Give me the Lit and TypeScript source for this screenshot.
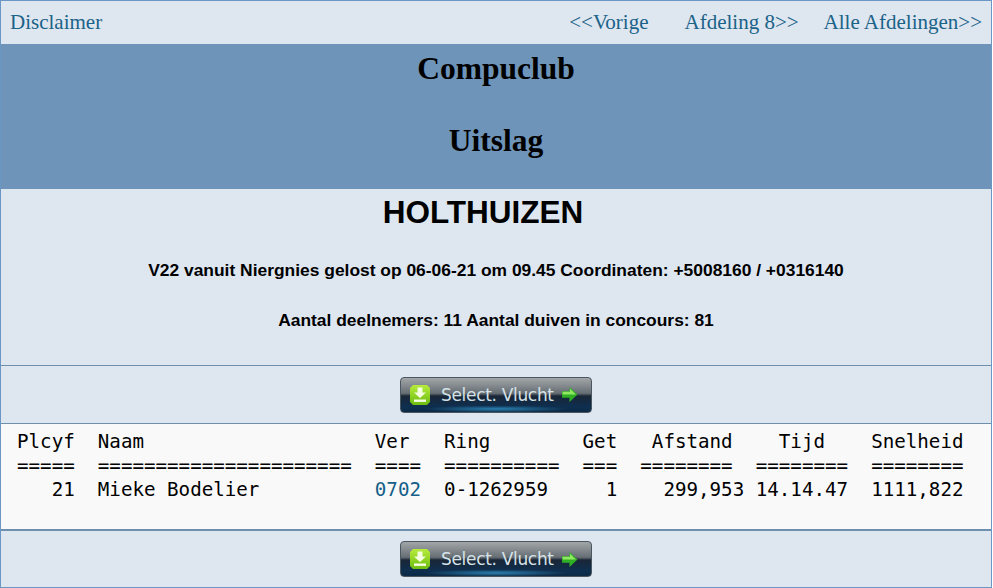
import { LitElement, html, css } from "lit";
import { customElement } from "lit/decorators.js";

const button = html`<a class="btn" href="#">
  <svg class="ico" width="22" height="22" viewBox="0 0 22 22">
    <defs><linearGradient id="g" x1="0" y1="0" x2="0" y2="1"><stop offset="0" stop-color="#b6ec3c"/><stop offset="1" stop-color="#6cbc10"/></linearGradient></defs>
    <path d="M4 1h14l3 3v14l-3 3H4l-3-3V4z" fill="url(#g)"/>
    <path d="M8.500 3.500h5v5h3.500L11 14 5 8.500h3.500z" fill="#f4fde0"/>
    <rect x="5" y="15.500" width="12" height="2.400" fill="#f4fde0"/>
  </svg>
  <span class="lbl">Select. Vlucht</span>
  <svg class="arr" width="17" height="17" viewBox="0 0 16 16">
    <path d="M8 1 15.500 8 8 15v-4H1V5h7z" fill="#2fb024"/>
    <path d="M8.500 2.500 14 8H1.500V5.500h7z" fill="#8fe860"/>
  </svg>
</a>`;

@customElement("app-root")
export class AppRoot extends LitElement {
  static styles = css`
    :host { display: block; width: 993px; height: 588px; overflow: hidden; }
    .page {
      box-sizing: border-box; width: 992px; height: 588px;
      border: 1px solid #6b97c4; background: #dee6f0;
      display: flex; flex-direction: column;
      font-family: "Liberation Serif", serif;
    }
    .nav {
      height: 43px; box-sizing: border-box; flex: none;
      display: flex; align-items: center; padding: 0 9px 0 9px;
      font-size: 21px;
    }
    .nav a { color: #1a6288; text-decoration: none; }
    .nav .spacer { flex: 1; }
    .nav .mid { margin-left: 36px; margin-right: 25px; }
    .band {
      height: 145px; flex: none; box-sizing: border-box; background: #6e94b9;
      text-align: center; color: #000;
      display: flex; flex-direction: column; gap: 35px; padding-top: 6px;
    }
    h1 { margin: 0; font-size: 31.500px; line-height: 37px; font-weight: bold; }
    .info {
      height: 176px; flex: none; box-sizing: border-box; text-align: center;
      font-family: "Liberation Sans", sans-serif; font-weight: bold; color: #000;
      padding-top: 5px;
    }
    .place { font-size: 31.500px; line-height: 37px; margin: 0 26px 0 0; }
    .info p { margin: 0; font-size: 17.420px; line-height: 20px; }
    .info p.a { margin-top: 29px; }
    .info p.b { margin-top: 30px; }
    .btnrow {
      flex: none; height: 58px; box-sizing: border-box;
      border-top: 1px solid #6f8fae;
      display: flex; align-items: center; justify-content: center;
    }
    .btnrow.bottom { flex: 1; height: auto; }
    .btn {
      box-sizing: border-box; width: 192px; height: 36px; border-radius: 4px;
      border: 1px solid #4a5660;
      background:
        radial-gradient(ellipse 38% 10% at 50% 91%, #2a80b0 0%, rgba(42, 128, 176, 0) 100%),
        linear-gradient(to bottom, #a2a6a8 0%, #666e74 45%, #1a2636 53%, #0e2f50 85%, #0d2a45 100%);
      display: flex; align-items: center; padding-left: 8px; gap: 10px;
      text-decoration: none;
    }
    .ico { flex: none; }
    .arr { flex: none; margin-left: -3px; }
    .lbl {
      font-family: "DejaVu Sans", sans-serif; font-size: 17px; color: #d5e2e8;
      letter-spacing: -0.320px; white-space: nowrap; font-weight: normal;
    }
    .table {
      flex: none; height: 107px; box-sizing: border-box; background: #f9f9f9;
      border-top: 1px solid #6f8fae; border-bottom: 1px solid #6f8fae;
      padding: 6px 0 0 16px;
      font-family: "DejaVu Sans Mono", monospace; font-size: 19.180px; line-height: 24px;
      color: #000;
    }
    .row { white-space: pre; }
    .table a { color: #155f88; text-decoration: none; }
  `;

  render() {
    return html`<div class="page">
      <div class="nav">
        <a href="#">Disclaimer</a><span class="spacer"></span>
        <a href="#">&lt;&lt;Vorige</a>
        <a class="mid" href="#">Afdeling 8&gt;&gt;</a>
        <a href="#">Alle Afdelingen&gt;&gt;</a>
      </div>
      <div class="band"><h1>Compuclub</h1><h1>Uitslag</h1></div>
      <div class="info">
        <div class="place">HOLTHUIZEN</div>
        <p class="a">V22 vanuit Niergnies gelost op 06-06-21 om 09.45 Coordinaten: +5008160 / +0316140</p>
        <p class="b">Aantal deelnemers: 11 Aantal duiven in concours: 81</p>
      </div>
      <div class="btnrow">${button}</div>
      <div class="table">
        <div class="row">Plcyf  Naam                    Ver   Ring        Get   Afstand    Tijd    Snelheid</div>
        <div class="row">=====  ======================  ====  ==========  ===  ========  ========  ========</div>
        <div class="row">   21  Mieke Bodelier          <a href="#">0702</a>  0-1262959     1    299,953 14.14.47  1111,822</div>
      </div>
      <div class="btnrow bottom">${button}</div>
    </div>`;
  }
}
